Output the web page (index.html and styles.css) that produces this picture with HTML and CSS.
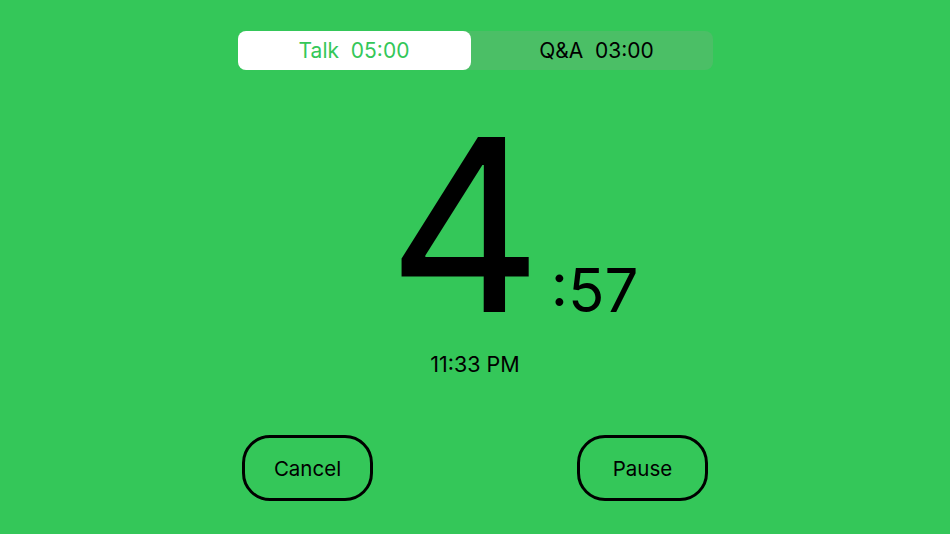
FILE: index.html
```html
<!DOCTYPE html>
<html lang="en">
<head>
<meta charset="utf-8">
<title>Timer</title>
<link rel="stylesheet" href="styles.css">
</head>
<body>
<main class="screen">
  <div class="segmented">
    <div class="segment segment-active">Talk&nbsp;&nbsp;05:00</div>
    <div class="segment segment-idle">Q&amp;A&nbsp;&nbsp;03:00</div>
  </div>
  <div class="countdown">
    <span class="minutes">4</span><span class="seconds">:57</span>
  </div>
  <div class="clock">11:33 PM</div>
  <div class="actions">
    <button class="pill">Cancel</button>
    <button class="pill">Pause</button>
  </div>
</main>
</body>
</html>
```
FILE: styles.css
```css
html, body {
  margin: 0;
  padding: 0;
  height: 100%;
}
body {
  background: #34c759;
  font-family: Inter, "Noto Sans", "Liberation Sans", sans-serif;
  color: #000;
  overflow: hidden;
}
.screen {
  width: 950px;
  height: 534px;
  display: flex;
  flex-direction: column;
  align-items: center;
  box-sizing: border-box;
  padding-top: 31px;
}
.segmented {
  display: flex;
  width: 475px;
  height: 39px;
  background: #4bbf66;
  border-radius: 8px;
}
.segment {
  display: flex;
  align-items: center;
  justify-content: center;
  font-size: 21px;
  color: #000;
  border-radius: 8px;
}
.segment-active {
  width: 233px;
  background: #fff;
  color: #34c759;
}
.segment-idle {
  flex: 1;
  padding-left: 10px;
}
.countdown {
  display: flex;
  align-items: baseline;
  margin-top: 35px;
  padding-left: 76px;
  line-height: 1;
}
.minutes {
  font-size: 240px;
  line-height: 240px;
}
.seconds {
  font-size: 60px;
  margin-left: 8px;
}
.clock {
  font-size: 21.5px;
  margin-top: 6px;
}
.actions {
  display: flex;
  justify-content: space-between;
  width: 466px;
  margin-top: 58px;
}
.pill {
  width: 131px;
  height: 66px;
  box-sizing: border-box;
  border: 3px solid #000;
  border-radius: 28px;
  background: transparent;
  font-family: inherit;
  font-size: 20.5px;
  color: #000;
  padding: 0;
}
```
